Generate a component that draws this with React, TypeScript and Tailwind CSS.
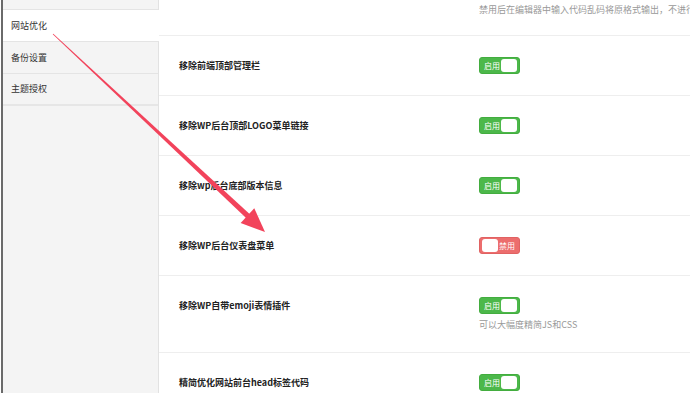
import React from "react";

const font = { fontFamily: '"Noto Sans CJK SC", "Noto Sans", sans-serif' };

function Toggle({ on }: { on: boolean }) {
  if (on) {
    return (
      <div className="flex h-[17px] w-[41px] items-center justify-between rounded-[3px] border border-[#43ad3f] bg-[#4cb84a] pl-[4px] pr-[2px]">
        <span className="text-[8px] leading-none text-white">启用</span>
        <span className="h-[13px] w-[16px] rounded-[3px] bg-white" />
      </div>
    );
  }
  return (
    <div className="flex h-[17px] w-[41px] items-center justify-between rounded-[3px] border border-[#e06262] bg-[#ec6d6d] pl-[2px] pr-[4px]">
      <span className="h-[13px] w-[16px] rounded-[3px] bg-white" />
      <span className="text-[8px] leading-none text-white">禁用</span>
    </div>
  );
}

function Row({ label, on, desc }: { label: string; on: boolean; desc?: string }) {
  return (
    <div className="flex shrink-0 items-start border-b border-[#eeeeee] pl-[20px] py-[21px]">
      <div className="w-[300px] shrink-0 text-[9px] font-bold leading-[17px] text-[#222]">{label}</div>
      <div className="flex flex-col">
        <Toggle on={on} />
        {desc && (
          <div className="mt-[5px] text-[9px] leading-[12px] text-[#999] whitespace-nowrap">{desc}</div>
        )}
      </div>
    </div>
  );
}

export default function App() {
  const sx = 53, sy = 34, tx = 265, ty = 232;
  const dx = tx - sx, dy = ty - sy;
  const len = Math.sqrt(dx * dx + dy * dy);
  const ux = dx / len, uy = dy / len;
  const nx = -uy, ny = ux;
  const headLen = 24, headHalf = 10;
  const bx = tx - ux * headLen, by = ty - uy * headLen;
  const shaftEnd = 2.6, shaftStart = 0.4;
  const shaft = [
    [sx + nx * shaftStart, sy + ny * shaftStart],
    [bx + ux * 2 + nx * shaftEnd, by + uy * 2 + ny * shaftEnd],
    [bx + ux * 2 - nx * shaftEnd, by + uy * 2 - ny * shaftEnd],
    [sx - nx * shaftStart, sy - ny * shaftStart],
  ]
    .map((p) => p.join(","))
    .join(" ");
  const head = [
    [tx, ty],
    [bx + nx * headHalf, by + ny * headHalf],
    [bx - nx * headHalf, by - ny * headHalf],
  ]
    .map((p) => p.join(","))
    .join(" ");

  return (
    <div className="relative flex h-[393px] w-[690px] overflow-hidden bg-white" style={font}>
      <div className="w-px shrink-0 bg-white" />
      <div className="w-[2px] shrink-0 bg-[#6a6a6a]" />
      {/* sidebar */}
      <div className="flex w-[156px] shrink-0 flex-col border-r border-[#e2e2e2] bg-[#f4f4f4]">
        <div className="h-[10px] shrink-0 border-b border-[#e4e4e4]" />
        <div className="relative -mr-px flex h-[32px] shrink-0 items-center border-b border-[#e4e4e4] bg-white pl-[8px] text-[9px] text-[#333]">
          网站优化
        </div>
        <div className="flex h-[32px] shrink-0 items-center border-b border-[#e4e4e4] pl-[8px] text-[9px] text-[#333]">
          备份设置
        </div>
        <div className="flex h-[32px] shrink-0 items-center border-b-2 border-[#e6e6e6] pl-[8px] text-[9px] text-[#333]">
          主题授权
        </div>
      </div>
      {/* main */}
      <div className="min-w-0 flex-1">
        <div className="flex h-[36px] border-b border-[#eeeeee] pl-[320px] pt-[4px]">
          <div className="text-[9px] leading-[12px] text-[#999] whitespace-nowrap">
            禁用后在编辑器中输入代码乱码将原格式输出，不进行转义处理
          </div>
        </div>
        <Row label="移除前端顶部管理栏" on />
        <Row label="移除WP后台顶部LOGO菜单链接" on />
        <Row label="移除wp后台底部版本信息" on />
        <Row label="移除WP后台仪表盘菜单" on={false} />
        <Row label="移除WP自带emoji表情插件" on desc="可以大幅度精简JS和CSS" />
        <Row label="精简优化网站前台head标签代码" on />
      </div>
      <svg className="pointer-events-none absolute left-0 top-0" width="690" height="393">
        <polygon points={shaft} fill="#f2435b" />
        <polygon points={head} fill="#f2435b" />
      </svg>
    </div>
  );
}
